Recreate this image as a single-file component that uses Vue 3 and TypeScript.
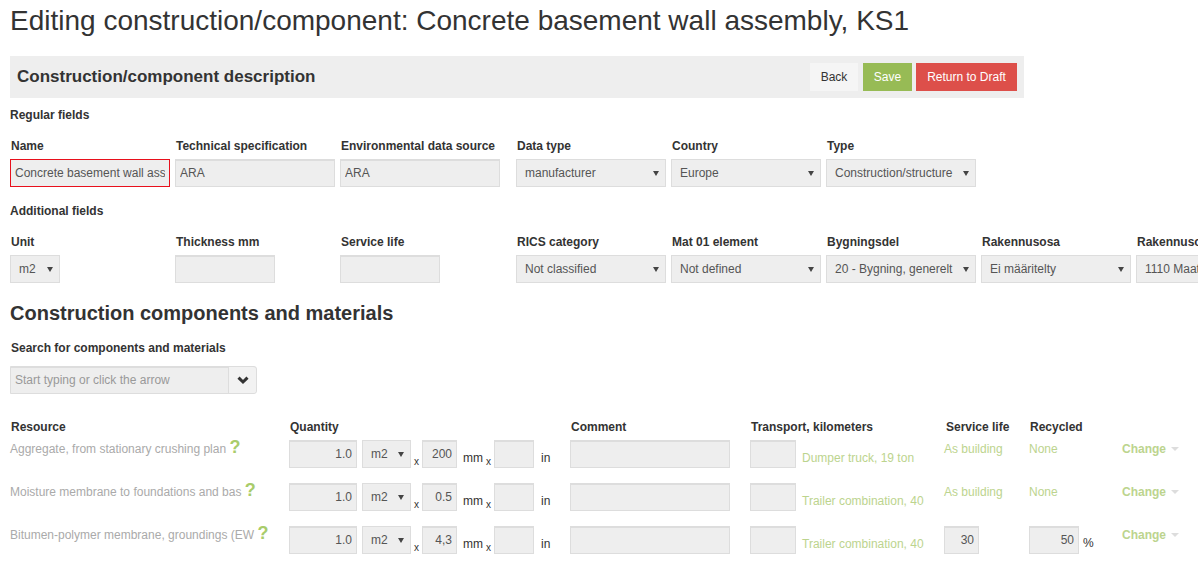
<script setup lang="ts">
const regular = [
  { label: 'Data type', value: 'manufacturer' },
  { label: 'Country', value: 'Europe' },
  { label: 'Type', value: 'Construction/structure' },
]
const additional = [
  { label: 'RICS category', value: 'Not classified' },
  { label: 'Mat 01 element', value: 'Not defined' },
  { label: 'Bygningsdel', value: '20 - Bygning, generelt' },
  { label: 'Rakennusosa', value: 'Ei määritelty' },
  { label: 'Rakennusosa', value: '1110 Maatyöt' },
]
interface Row {
  name: string
  size: string
  transport: string
  life?: string
  recycled?: string
}
const rows: Row[] = [
  { name: 'Aggregate, from stationary crushing plan', size: '200', transport: 'Dumper truck, 19 ton' },
  { name: 'Moisture membrane to foundations and bas', size: '0.5', transport: 'Trailer combination, 40' },
  { name: 'Bitumen-polymer membrane, groundings (EW', size: '4,3', transport: 'Trailer combination, 40', life: '30', recycled: '50' },
]
</script>

<template>
  <div class="page">
    <h1 class="title">Editing construction/component: Concrete basement wall assembly, KS1</h1>

    <div class="bar">
      <h2 class="bar-title">Construction/component description</h2>
      <div class="actions">
        <button class="btn btn-back">Back</button>
        <button class="btn btn-save">Save</button>
        <button class="btn btn-draft">Return to Draft</button>
      </div>
    </div>

    <h3 class="group">Regular fields</h3>
    <div class="fields">
      <label class="field">
        <span class="label">Name</span>
        <input class="box w160 invalid" value="Concrete basement wall assembly, KS1" />
      </label>
      <label class="field">
        <span class="label">Technical specification</span>
        <input class="box w160" value="ARA" />
      </label>
      <label class="field">
        <span class="label">Environmental data source</span>
        <input class="box w160" value="ARA" />
      </label>
      <label v-for="f in regular" :key="f.label" class="field">
        <span class="label">{{ f.label }}</span>
        <span class="select w150"><span class="select-text">{{ f.value }}</span></span>
      </label>
    </div>

    <h3 class="group group-add">Additional fields</h3>
    <div class="fields">
      <label class="field">
        <span class="label">Unit</span>
        <span class="select w50"><span class="select-text">m2</span></span>
      </label>
      <label class="field">
        <span class="label">Thickness mm</span>
        <input class="box w100" />
      </label>
      <label class="field">
        <span class="label">Service life</span>
        <input class="box w100" />
      </label>
      <label v-for="(f, i) in additional" :key="i" class="field">
        <span class="label">{{ f.label }}</span>
        <span class="select w150"><span class="select-text">{{ f.value }}</span></span>
      </label>
    </div>

    <h2 class="section">Construction components and materials</h2>
    <div class="search-label">Search for components and materials</div>
    <div class="search">
      <input class="search-input" placeholder="Start typing or click the arrow" />
      <span class="search-btn">
        <svg width="12" height="10" viewBox="0 0 12 10">
          <path d="M1.5 2.6 6 7 10.5 2.6" fill="none" stroke="#333" stroke-width="3" />
        </svg>
      </span>
    </div>

    <div class="table">
      <div class="thead">
        <span>Resource</span>
        <span>Quantity</span>
        <span>Comment</span>
        <span>Transport, kilometers</span>
        <span class="th-life">Service life</span>
        <span>Recycled</span>
        <span></span>
      </div>
      <div v-for="r in rows" :key="r.name" class="trow">
        <div class="res">{{ r.name }} <span class="help">?</span></div>
        <div class="qty">
          <input class="box q-amount" value="1.0" />
          <span class="select w49"><span class="select-text">m2</span></span>
          <span class="x">x</span>
          <input class="box q-size" :value="r.size" />
          <span class="unit">mm</span>
          <span class="x x-b">x</span>
          <input class="box q-in" />
          <span class="unit unit-in">in</span>
        </div>
        <div><input class="box w160" /></div>
        <div class="transport">
          <input class="box w46" />
          <span class="green">{{ r.transport }}</span>
        </div>
        <div>
          <input v-if="r.life" class="box q-life" :value="r.life" />
          <span v-else class="green cell-text">As building</span>
        </div>
        <div class="recycled">
          <template v-if="r.recycled">
            <input class="box q-rec" :value="r.recycled" />
            <span class="pct">%</span>
          </template>
          <span v-else class="green cell-text">None</span>
        </div>
        <div class="change">Change <i class="caret"></i></div>
      </div>
    </div>
  </div>
</template>

<style>
html, body { margin: 0; overflow: hidden; background: #fff; }
</style>

<style scoped>
.page {
  width: 1198px;
  height: 574px;
  overflow: hidden;
  padding-left: 10px;
  box-sizing: border-box;
  font: 12px/17px "Liberation Sans", Arial, sans-serif;
  color: #333;
}
.title {
  margin: 0;
  height: 56px;
  font-size: 28px;
  line-height: 41px;
  font-weight: 400;
  white-space: nowrap;
}
.bar {
  width: 1014px;
  height: 42px;
  background: #eee;
  display: flex;
  align-items: center;
  justify-content: space-between;
  padding: 0 7px;
  box-sizing: border-box;
}
.bar-title { margin: 0; padding-bottom: 2px; font-size: 17px; font-weight: 700; }
.actions { display: flex; gap: 4px; }
.btn {
  height: 28px;
  border: 0;
  padding: 0;
  font: 12px "Liberation Sans", Arial, sans-serif;
  color: #fff;
}
.btn-back { background: #f5f5f5; color: #333; width: 48px; margin-right: 1px; }
.btn-save { background: #97bb55; width: 49px; }
.btn-draft { background: #dd4f4a; width: 101px; }
.group { margin: 9px 0 0; font-size: 12px; line-height: 17px; font-weight: 700; }
.group-add { margin-top: 16px; }
.fields {
  margin-top: 14px;
  display: grid;
  grid-template-columns: 165px 165px 176px repeat(5, 155px);
  width: 1400px;
}
.field { display: flex; flex-direction: column; }
.label { font-weight: 700; padding-left: 1px; margin-bottom: 4px; line-height: 17px; white-space: nowrap; }
.box {
  height: 28px;
  box-sizing: border-box;
  background: #eee;
  border: 1px solid #ddd;
  box-shadow: inset 0 1px 0 #ddd;
  padding: 0 4px;
  font: 12px "Liberation Sans", Arial, sans-serif;
  color: #555;
  outline: none;
  margin: 0;
  display: block;
}
.invalid { border: 1px solid #e8101c; box-shadow: none; }
.w160 { width: 160px; }
.w100 { width: 100px; }
.w46 { width: 46px; }
.select {
  position: relative;
  display: block;
  height: 28px;
  box-sizing: border-box;
  background: #eee;
  border: 1px solid #ddd;
  line-height: 27px;
  color: #555;
  padding-left: 8px;
  overflow: hidden;
}
.select::after {
  content: "";
  position: absolute;
  right: 6px;
  top: 11px;
  border-left: 3.5px solid transparent;
  border-right: 3.5px solid transparent;
  border-top: 5.5px solid #444;
}
.select-text { white-space: nowrap; }
.w150 { width: 150px; }
.w50 { width: 50px; }
.w49 { width: 49px; flex: none; }
.section { margin: 17px 0 0; font-size: 20px; line-height: 26px; font-weight: 700; }
.search-label { margin-top: 14px; font-weight: 700; padding-left: 1px; }
.search {
  margin-top: 9px;
  width: 247px;
  height: 28px;
  box-sizing: border-box;
  display: flex;
  background: #eee;
  border: 1px solid #ddd;
  box-shadow: inset 0 1px 0 #ddd;
  border-radius: 0 3px 3px 0;
}
.search-input {
  flex: 1;
  min-width: 0;
  border: 0;
  background: transparent;
  padding: 0 4px;
  font: 12px "Liberation Sans", Arial, sans-serif;
  outline: none;
}
.search-input::placeholder { color: #999; opacity: 1; }
.search-btn {
  width: 27px;
  display: flex;
  align-items: center;
  justify-content: center;
  border-left: 1px solid #ddd;
  background: #f2f2f2;
  border-radius: 0 3px 3px 0;
}
.table { margin-top: 25px; }
.thead, .trow {
  display: grid;
  grid-template-columns: 279px 281px 180px 194px 85px 93px 66px;
}
.thead { font-weight: 700; height: 21px; line-height: 17px; }
.thead span { padding-left: 1px; }
.thead .th-life { padding-left: 2px; }
.trow { height: 43px; }
.res { color: #aaa; line-height: 17px; white-space: nowrap; margin-top: -1px; }
.help { color: #a9cc6a; font-size: 18px; font-weight: 700; line-height: 17px; }
.qty { display: flex; }
.q-amount { width: 68px; margin-right: 5px; text-align: right; flex: none; }
.q-size { width: 35px; text-align: right; flex: none; }
.q-in { width: 40px; flex: none; }
.x { font-size: 10px; width: 11px; margin-top: 13px; text-align: center; flex: none; }
.unit { margin: 10px 0 0 6px; flex: none; }
.unit-in { margin-left: 7px; }
.transport { display: flex; }
.transport .green { margin: 10px 0 0 6px; white-space: nowrap; }
.green { color: #bcd48e; }
.cell-text { display: block; line-height: 17px; padding-top: 1px; }
.q-life { width: 35px; text-align: right; }
.recycled { display: flex; }
.q-rec { width: 50px; text-align: right; }
.pct { margin: 9px 0 0 4px; }
.change { color: #bcd48e; font-weight: 700; line-height: 17px; padding-top: 1px; white-space: nowrap; }
.caret {
  display: inline-block;
  margin-left: 2px;
  vertical-align: 2px;
  border-left: 4px solid transparent;
  border-right: 4px solid transparent;
  border-top: 4px solid #ddd;
}
</style>
